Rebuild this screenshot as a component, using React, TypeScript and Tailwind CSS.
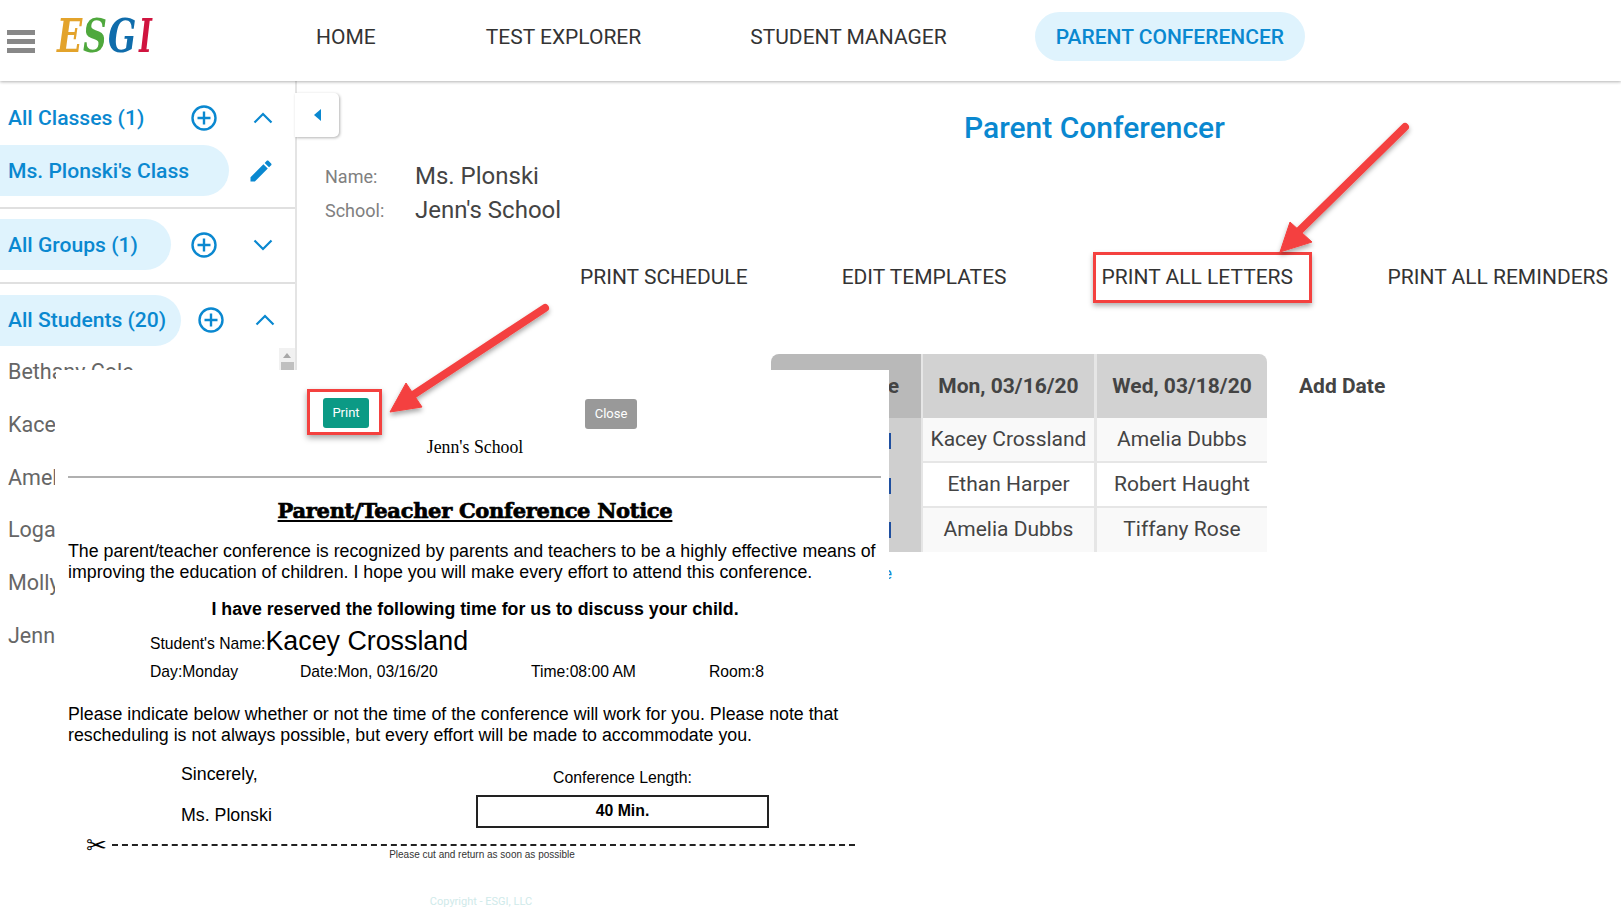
import React from "react";

const Plus = () => (
  <svg width="26" height="26" viewBox="0 0 26 26" fill="none" stroke="#0a88d0" strokeWidth="2.4" className="shrink-0">
    <circle cx="13" cy="13" r="11.5" />
    <path d="M13 6.5v13M6.5 13h13" />
  </svg>
);

const Chevron = ({ up }: { up: boolean }) => (
  <svg width="20" height="12" viewBox="0 0 20 12" fill="none" stroke="#0a88d0" strokeWidth="2.2" className="shrink-0">
    <path d={up ? "M1.5 10.5L10 2l8.5 8.5" : "M1.5 1.5L10 10l8.5-8.5"} />
  </svg>
);

const Pencil = () => (
  <svg width="28" height="28" viewBox="0 0 24 24" fill="#0a88d0" className="shrink-0">
    <path d="M3 17.25V21h3.75L17.81 9.94l-3.75-3.75L3 17.25zM20.71 7.04c.39-.39.39-1.02 0-1.41l-2.34-2.34c-.39-.39-1.02-.39-1.41 0l-1.83 1.83 3.75 3.75 1.83-1.83z" />
  </svg>
);

const Header = () => (
  <header className="relative z-10 h-[81px] flex items-center bg-white shadow-[0_1px_3px_rgba(0,0,0,0.3)]">
    <div className="ml-[7px] w-[28px] flex flex-col gap-[4px] mt-[2px] shrink-0">
      <div className="h-[5px] bg-[#888888]" />
      <div className="h-[5px] bg-[#888888]" />
      <div className="h-[5px] bg-[#888888]" />
    </div>
    <div className="ml-[22px] w-[92px] h-[44px] -mt-[9px] shrink-0 flex italic font-bold text-[46px] leading-[44px] font-['DejaVu_Serif',serif]">
      <span className="w-[26px] text-[#e3a32b] inline-block scale-x-[0.72] origin-left">E</span>
      <span className="w-[25px] text-[#4fa83d] inline-block scale-x-[0.72] origin-left">S</span>
      <span className="w-[31px] text-[#0f6cab] inline-block scale-x-[0.72] origin-left">G</span>
      <span className="w-[10px] text-[#d0143f] inline-block scale-x-[0.6] origin-left">I</span>
    </div>
    <nav className="flex items-center text-[21px] text-[#333333] -mt-[9px]">
      <span className="ml-[167px] pt-[4px]">HOME</span>
      <span className="ml-[110px] pt-[4px]">TEST EXPLORER</span>
      <span className="ml-[109px] pt-[4px]">STUDENT MANAGER</span>
      <span className="ml-[88px] h-[49px] px-[21px] pt-[3px] flex items-center rounded-full bg-[#dff3fd] text-[#0a88d0] font-medium">PARENT CONFERENCER</span>
    </nav>
  </header>
);

const studentClass = "h-[52.6px] w-[47px] flex items-center whitespace-nowrap overflow-hidden";

const Sidebar = () => (
  <aside className="w-[297px] shrink-0 border-r-[2px] border-[#e4e4e4] text-[21.1px] font-medium text-[#0a88d0] h-full">
    <div className="h-[128px] border-b-[2px] border-[#e0e0e0]">
      <div className="h-[64px] pt-[10px] flex items-center pl-[8px]">
        <span className="w-[183px]">All Classes (1)</span>
        <Plus />
        <span className="ml-[36px]"><Chevron up /></span>
      </div>
      <div className="flex items-center">
        <div className="w-[229px] h-[51px] pl-[8px] flex items-center rounded-r-full bg-[#dff3fd]">Ms. Plonski's Class</div>
        <span className="ml-[18px]"><Pencil /></span>
      </div>
    </div>
    <div className="h-[75px] pb-[2px] border-b-[2px] border-[#e0e0e0] flex items-center">
      <div className="w-[171px] h-[51px] pl-[8px] flex items-center rounded-r-full bg-[#dff3fd]">All Groups (1)</div>
      <span className="ml-[20px]"><Plus /></span>
      <span className="ml-[36px]"><Chevron up={false} /></span>
    </div>
    <div className="h-[72px] flex items-center">
      <div className="w-[181px] h-[51px] pl-[8px] flex items-center rounded-r-full bg-[#dff3fd]">All Students (20)</div>
      <span className="ml-[17px]"><Plus /></span>
      <span className="ml-[31px]"><Chevron up /></span>
    </div>
    <div className="relative -mt-[10px] flex flex-col pl-[8px] font-normal text-[#666666] text-[21.5px]">
      <span className="h-[53px] flex items-center whitespace-nowrap">Bethany Cole</span>
      <span className={studentClass}>Kacey Crossland</span>
      <span className={studentClass}>Amelia Dubbs</span>
      <span className={studentClass}>Logan Ellis</span>
      <span className={studentClass}>Molly Green</span>
      <span className={studentClass}>Jenna Hart</span>
      <div className="absolute right-0 top-[2px] w-[16px] h-[26px] bg-[#f1f1f1] flex flex-col items-center pt-[5px]">
        <div className="w-0 h-0 border-x-[4px] border-x-transparent border-b-[5px] border-b-[#a8a8a8]" />
        <div className="mt-[4px] w-[13px] h-[14px] bg-[#c0c0c0]" />
      </div>
    </div>
  </aside>
);

const Cell = ({ children, className }: { children: React.ReactNode; className: string }) => (
  <div className={"flex items-center justify-center " + className}>{children}</div>
);

const TimeCell = () => (
  <div className="bg-[#cfcfcf] flex items-center pl-[118px] border-r-[2px] border-[#e6e6e6]">
    <div className="w-[2px] h-[16px] bg-[#1f4f9f]" />
  </div>
);

const Main = () => (
  <main className="flex-1 min-w-0 relative">
    <div className="absolute -left-[2px] top-[12px] w-[44px] h-[44px] bg-white rounded-r-[5px] shadow-[1px_1px_3px_rgba(0,0,0,0.3)] flex items-center justify-center">
      <div className="w-0 h-0 border-y-[6px] border-y-transparent border-r-[7px] border-r-[#0a88d0]" />
    </div>
    <h1 className="pt-[25px] pl-[667px] h-[65px] text-[30px] leading-[44px] font-medium text-[#0a88d0]">Parent Conferencer</h1>
    <div className="pl-[28px] pt-[13px] flex flex-col">
      <div className="h-[34px] flex items-center">
        <span className="w-[90px] text-[18px] text-[#808080]">Name:</span>
        <span className="text-[24px] text-[#444444]">Ms. Plonski</span>
      </div>
      <div className="h-[34px] flex items-center">
        <span className="w-[90px] text-[18px] text-[#808080]">School:</span>
        <span className="text-[24px] text-[#444444]">Jenn's School</span>
      </div>
    </div>
    <div className="mt-[25px] h-[51px] flex items-center text-[21px] text-[#333333] whitespace-nowrap">
      <span className="ml-[283px]">PRINT SCHEDULE</span>
      <span className="ml-[94px]">EDIT TEMPLATES</span>
      <div className="ml-[86px] w-[219px] h-[51px] pl-[6px] flex items-center border-[3px] border-[#f4413f] shadow-[0_3px_5px_rgba(0,0,0,0.3)]">PRINT ALL LETTERS</div>
      <span className="ml-[76px]">PRINT ALL REMINDERS</span>
    </div>
    <div className="mt-[51px] ml-[474px] flex text-[21px] text-[#444444]">
      <div className="w-[496px] rounded-t-[8px] overflow-hidden grid grid-cols-[152px_174px_170px] grid-rows-[64px_45px_45px_44px]">
        <div className="bg-[#b9b9b9] flex items-center justify-end pr-[22px] pt-[2px] font-bold border-r-[2px] border-[#e6e6e6]">Date</div>
        <Cell className="bg-[#d2d2d2] pt-[2px] font-bold border-r-[3px] border-[#e6e6e6]">Mon, 03/16/20</Cell>
        <Cell className="bg-[#d2d2d2] pt-[2px] font-bold">Wed, 03/18/20</Cell>
        <TimeCell />
        <Cell className="bg-[#f9f9f9] pt-[1px] border-r-[3px] border-b-[2px] border-[#e6e6e6]">Kacey Crossland</Cell>
        <Cell className="bg-[#f9f9f9] pt-[1px] border-b-[2px] border-[#e6e6e6]">Amelia Dubbs</Cell>
        <TimeCell />
        <Cell className="bg-white pt-[1px] border-r-[3px] border-b-[2px] border-[#e6e6e6]">Ethan Harper</Cell>
        <Cell className="bg-white pt-[1px] border-b-[2px] border-[#e6e6e6]">Robert Haught</Cell>
        <TimeCell />
        <Cell className="bg-[#f9f9f9] border-r-[3px] border-[#e6e6e6]">Amelia Dubbs</Cell>
        <Cell className="bg-[#f9f9f9]">Tiffany Rose</Cell>
      </div>
      <div className="ml-[32px] h-[64px] pt-[2px] flex items-center font-bold">Add Date</div>
    </div>
    <div className="ml-[471px] mt-[14px] w-[124px] text-right text-[16px] leading-none text-[#0a88d0]">Delete</div>
  </main>
);

const Letter = () => (
  <div className="absolute left-[56px] top-[370px] w-[833px] h-[541px] bg-white z-20 font-['Liberation_Sans',sans-serif] text-[17.78px] leading-[20.7px] text-black">
    <div className="pt-[19px] pl-[251px] flex items-start font-['Roboto',sans-serif]">
      <div className="w-[75px] h-[46px] border-[3px] border-[#f4413f] shadow-[0_3px_6px_rgba(0,0,0,0.35)] flex items-center justify-center pl-[3px] pt-[2px]">
        <div className="w-[46px] h-[30px] rounded-[3px] bg-[#0b9a85] text-white text-[13px] flex items-center justify-center">Print</div>
      </div>
      <div className="ml-[203px] mt-[10px] w-[52px] h-[30px] rounded-[3px] bg-[#999999] text-white text-[13px] flex items-center justify-center">Close</div>
    </div>
    <div className="w-[838px] text-center font-['Liberation_Serif',serif] text-[17.8px] leading-[24px]">Jenn's School</div>
    <div className="mt-[17px] ml-[12px] w-[813px] h-[2px] bg-[#b0b0b0]" />
    <div className="mt-[20px] w-[838px] text-center text-[21px] leading-[26px] font-bold underline font-['DejaVu_Serif',serif] tracking-[-0.3px] [-webkit-text-stroke:0.7px_black]">Parent/Teacher Conference Notice</div>
    <p className="mt-[17px] ml-[12px] w-[815px]">The parent/teacher conference is recognized by parents and teachers to be a highly effective means of improving the education of children. I hope you will make every effort to attend this conference.</p>
    <p className="mt-[17px] w-[838px] text-center font-bold">I have reserved the following time for us to discuss your child.</p>
    <div className="mt-[5px] ml-[94px] flex items-center text-[15.7px] leading-[20px]">
      <span className="pt-[6px]">Student's Name:</span>
      <span className="text-[26.8px] leading-[32px]">Kacey Crossland</span>
    </div>
    <div className="mt-[5px] ml-[94px] flex text-[15.7px] leading-[20px]">
      <span className="w-[150px]">Day:Monday</span>
      <span className="w-[231px]">Date:Mon, 03/16/20</span>
      <span className="w-[178px]">Time:08:00 AM</span>
      <span>Room:8</span>
    </div>
    <p className="mt-[22px] ml-[12px] w-[800px]">Please indicate below whether or not the time of the conference will work for you. Please note that rescheduling is not always possible, but every effort will be made to accommodate you.</p>
    <div className="mt-[18px] ml-[125px] flex">
      <div className="w-[295px] flex flex-col gap-[21px]">
        <span>Sincerely,</span>
        <span>Ms. Plonski</span>
      </div>
      <div className="w-[293px] pt-[4px] text-center text-[15.8px]">
        <div>Conference Length:</div>
        <div className="mt-[7px] h-[33px] border-[2px] border-[#222222] flex items-center justify-center font-bold">40 Min.</div>
      </div>
    </div>
    <div className="mt-[7px] ml-[30px] h-[20px] flex items-center">
      <span className="w-[26px] text-[25px] leading-none font-['DejaVu_Sans',sans-serif]">✂</span>
      <div className="w-[743px] border-t-[2px] border-dashed border-[#222222]" />
    </div>
    <div className="-mt-[6px] w-[852px] text-center text-[10px] leading-[12px] text-[#333333]">Please cut and return as soon as possible</div>
    <div className="mt-[34px] w-[850px] text-center text-[11px] leading-[14px] text-[#cfeaea] font-['Roboto',sans-serif]">Copyright - ESGI, LLC</div>
  </div>
);

const Arrows = () => (
  <svg className="absolute inset-0 z-30 pointer-events-none" width="1621" height="911" viewBox="0 0 1621 911">
    <defs>
      <filter id="sh" x="-20%" y="-20%" width="140%" height="140%">
        <feDropShadow dx="0" dy="3" stdDeviation="2.5" floodColor="#000" floodOpacity="0.35" />
      </filter>
    </defs>
    <g filter="url(#sh)" fill="#f4413f" stroke="#f4413f">
      <path d="M1405 127L1297 233" strokeWidth="8" strokeLinecap="round" fill="none" />
      <path d="M1280 252L1290 222L1312 242Z" strokeWidth="1" />
      <path d="M545 308L413 395" strokeWidth="8" strokeLinecap="round" fill="none" />
      <path d="M390 412L406 383L422 407Z" strokeWidth="1" />
    </g>
  </svg>
);

export default function App() {
  return (
    <div className="relative w-[1621px] h-[911px] overflow-hidden bg-white font-['Roboto',sans-serif]">
      <Header />
      <div className="flex h-[830px]">
        <Sidebar />
        <Main />
      </div>
      <Letter />
      <Arrows />
    </div>
  );
}
